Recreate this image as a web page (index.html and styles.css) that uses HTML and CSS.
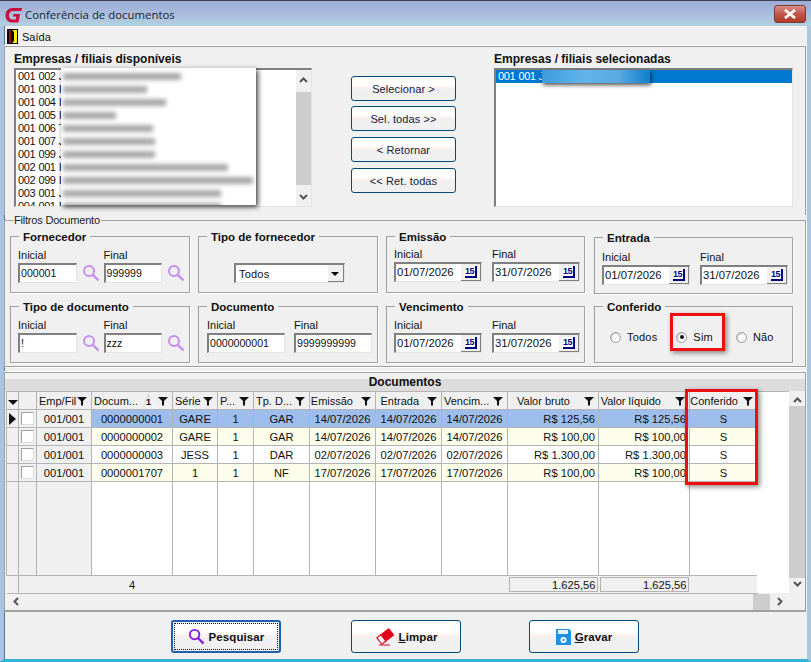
FILE: index.html
```html
<!DOCTYPE html>
<html lang="pt-BR">
  <head>
    <meta charset="UTF-8" />
    <title>Conferência de documentos</title>
    <link rel="stylesheet" href="styles.css">
  </head>
  <body>
    <svg class="icon-defs" width="0" height="0">
      <symbol id="lupa" viewBox="0 0 18 18">
        <circle cx="7" cy="7" r="5" fill="none" stroke="currentColor" stroke-width="2"/>
        <path d="M10.8 10.8 L16.5 16.5" stroke="currentColor" stroke-width="2.4" fill="none"/>
      </symbol>
      <symbol id="funil" viewBox="0 0 10 10">
        <path d="M0 1 H10 L6 5 V9.5 H4 V5 Z" fill="#111"/>
      </symbol>
    </svg>

    <div class="window">
      <div class="titlebar">
        <svg class="logo" width="18" height="18" viewBox="0 0 18 18">
          <path d="M17 2 H8 C3 2 0.5 5.5 0.5 9.5 C0.5 14 3.5 16.5 7.5 16.5 H13.5 L15 8 H8.5 L8 10.5 H11.3 L10.8 13.5 H7.5 C5.5 13.5 4 12 4 9.5 C4 7 5.5 5 8 5 H16.5 Z" fill="#c4123c"/>
        </svg>
        <span class="title">Conferência de documentos</span>
        <div class="close-btn">
          <svg width="16" height="10" viewBox="0 0 16 10"><path d="M3 1 L13 9 M13 1 L3 9" stroke="#fff" stroke-width="2.8"/></svg>
        </div>
      </div>

      <div class="menubar">
        <svg width="12" height="16" viewBox="0 0 12 16">
          <rect width="11" height="15" fill="#000"/>
          <path d="M5 1 H10 V14 H5 L7 12 V3 Z" fill="#ffee00"/>
          <path d="M2 1 H4 V14 H2 Z" fill="#a01010"/>
        </svg>
        <span>Saída</span>
      </div>

      <div class="top-group">
        <div class="list-col">
          <div class="bold-label">Empresas / filiais disponíveis</div>
          <div class="listbox">
            <div class="list-rows">
              <div class="list-row">001 002 J</div>
              <div class="list-row">001 003 I</div>
              <div class="list-row">001 004 I</div>
              <div class="list-row">001 005 I</div>
              <div class="list-row">001 006 T</div>
              <div class="list-row">001 007 J</div>
              <div class="list-row">001 099 J</div>
              <div class="list-row">002 001 I</div>
              <div class="list-row">002 099 I</div>
              <div class="list-row">003 001 J</div>
              <div class="list-row">004 001 I</div>
            </div>
            <div class="list-scroll">
              <svg class="chev" width="9" height="6" viewBox="0 0 9 6"><path d="M1 5 L4.5 1.5 L8 5" fill="none" stroke="#555" stroke-width="2"/></svg>
              <div class="list-thumb"></div>
              <svg class="chev" width="9" height="6" viewBox="0 0 9 6"><path d="M1 1 L4.5 4.5 L8 1" fill="none" stroke="#555" stroke-width="2"/></svg>
            </div>
            <div class="censor">
              <div class="smear" style="width: 118px"></div>
              <div class="smear" style="width: 84px"></div>
              <div class="smear" style="width: 103px"></div>
              <div class="smear" style="width: 53px"></div>
              <div class="smear" style="width: 90px"></div>
              <div class="smear" style="width: 92px"></div>
              <div class="smear" style="width: 92px"></div>
              <div class="smear" style="width: 165px"></div>
              <div class="smear" style="width: 190px"></div>
              <div class="smear" style="width: 158px"></div>
              <div class="smear" style="width: 158px"></div>
            </div>
          </div>
        </div>

        <div class="move-buttons">
          <div class="btn">Selecionar &gt;</div>
          <div class="btn">Sel. todas &gt;&gt;</div>
          <div class="btn">&lt; Retornar</div>
          <div class="btn">&lt;&lt; Ret. todas</div>
        </div>

        <div class="list-col list-col-right">
          <div class="bold-label">Empresas / filiais selecionadas</div>
          <div class="listbox">
            <div class="list-rows">
              <div class="list-row selected">001 001 J</div>
            </div>
            <div class="censor-sel"></div>
          </div>
        </div>
      </div>

      <fieldset class="filters">
        <legend>Filtros Documento</legend>
        <div class="filter-grid">
          <fieldset class="box">
            <legend>Fornecedor</legend>
            <div class="box-row">
              <div class="field w59"><label>Inicial</label><div class="input">000001</div></div>
              <svg class="lupa"><use href="#lupa"/></svg>
              <div class="field w59"><label>Final</label><div class="input">999999</div></div>
              <svg class="lupa"><use href="#lupa"/></svg>
            </div>
          </fieldset>

          <fieldset class="box">
            <legend>Tipo de fornecedor</legend>
            <div class="box-row select-row">
              <div class="select">
                <span>Todos</span>
                <div class="select-arrow"></div>
              </div>
            </div>
          </fieldset>

          <fieldset class="box box-emissao">
            <legend>Emissão</legend>
            <div class="box-row date-row">
              <div class="field w88"><label>Inicial</label><div class="input date">01/07/2026<div class="date-btn"><span class="cal">15</span></div></div></div>
              <div class="field w88"><label>Final</label><div class="input date">31/07/2026<div class="date-btn"><span class="cal">15</span></div></div></div>
            </div>
          </fieldset>

          <fieldset class="box box-last box-entrada">
            <legend>Entrada</legend>
            <div class="box-row date-row">
              <div class="field w88"><label>Inicial</label><div class="input date">01/07/2026<div class="date-btn"><span class="cal">15</span></div></div></div>
              <div class="field w88"><label>Final</label><div class="input date">31/07/2026<div class="date-btn"><span class="cal">15</span></div></div></div>
            </div>
          </fieldset>

          <fieldset class="box">
            <legend>Tipo de documento</legend>
            <div class="box-row">
              <div class="field w59"><label>Inicial</label><div class="input">!</div></div>
              <svg class="lupa"><use href="#lupa"/></svg>
              <div class="field w59"><label>Final</label><div class="input">zzz</div></div>
              <svg class="lupa"><use href="#lupa"/></svg>
            </div>
          </fieldset>

          <fieldset class="box">
            <legend>Documento</legend>
            <div class="box-row doc-row">
              <div class="field w78"><label>Inicial</label><div class="input">0000000001</div></div>
              <div class="field w78"><label>Final</label><div class="input">9999999999</div></div>
            </div>
          </fieldset>

          <fieldset class="box">
            <legend>Vencimento</legend>
            <div class="box-row date-row">
              <div class="field w88"><label>Inicial</label><div class="input date">01/07/2026<div class="date-btn"><span class="cal">15</span></div></div></div>
              <div class="field w88"><label>Final</label><div class="input date">31/07/2026<div class="date-btn"><span class="cal">15</span></div></div></div>
            </div>
          </fieldset>

          <fieldset class="box box-last">
            <legend>Conferido</legend>
            <div class="radio-row">
              <div class="radio-item r-todos"><span class="radio"></span>Todos</div>
              <div class="radio-item r-sim"><span class="radio checked"></span>Sim</div>
              <div class="radio-item"><span class="radio"></span>Não</div>
            </div>
          </fieldset>
        </div>
      </fieldset>

      <div class="docs">
        <div class="docs-title">Documentos</div>
        <div class="docs-body">
          <div class="grid-wrap">
            <table class="grid">
              <colgroup>
                <col class="c-ind"><col class="c-chk"><col class="c-emp"><col class="c-doc"><col class="c-ser"><col class="c-p"><col class="c-tp"><col class="c-dt"><col class="c-dt"><col class="c-dt"><col class="c-val"><col class="c-val"><col class="c-conf">
              </colgroup>
              <thead>
                <tr>
                  <th><span class="tri-down"></span></th>
                  <th></th>
                  <th><div class="th-in"><span>Emp/Fil</span><svg class="funil"><use href="#funil"/></svg></div></th>
                  <th><div class="th-in"><span>Docum...</span><span class="sort-badge">1</span><svg class="funil"><use href="#funil"/></svg></div></th>
                  <th><div class="th-in"><span>Série</span><svg class="funil"><use href="#funil"/></svg></div></th>
                  <th><div class="th-in"><span>P...</span><svg class="funil"><use href="#funil"/></svg></div></th>
                  <th><div class="th-in"><span>Tp. D...</span><svg class="funil"><use href="#funil"/></svg></div></th>
                  <th><div class="th-in th-mid"><span>Emissão</span><svg class="funil"><use href="#funil"/></svg></div></th>
                  <th><div class="th-in th-mid"><span>Entrada</span><svg class="funil"><use href="#funil"/></svg></div></th>
                  <th><div class="th-in"><span>Vencim...</span><svg class="funil"><use href="#funil"/></svg></div></th>
                  <th><div class="th-in th-val"><span>Valor bruto</span><svg class="funil"><use href="#funil"/></svg></div></th>
                  <th><div class="th-in th-val"><span>Valor líquido</span><svg class="funil"><use href="#funil"/></svg></div></th>
                  <th><div class="th-in th-mid th-conf"><span>Conferido</span><svg class="funil"><use href="#funil"/></svg></div></th>
                </tr>
              </thead>
              <tbody>
                <tr class="row-sel">
                  <td class="fixed"><span class="tri-right"></span></td>
                  <td class="fixed"><span class="chk"></span></td>
                  <td class="fixed">001/001</td>
                  <td>0000000001</td><td>GARE</td><td>1</td><td>GAR</td>
                  <td>14/07/2026</td><td>14/07/2026</td><td>14/07/2026</td>
                  <td class="val">R$ 125,56</td><td class="val">R$ 125,56</td><td>S</td>
                </tr>
                <tr class="row-alt">
                  <td class="fixed"></td>
                  <td class="fixed"><span class="chk"></span></td>
                  <td class="fixed">001/001</td>
                  <td>0000000002</td><td>GARE</td><td>1</td><td>GAR</td>
                  <td>14/07/2026</td><td>14/07/2026</td><td>14/07/2026</td>
                  <td class="val">R$ 100,00</td><td class="val">R$ 100,00</td><td>S</td>
                </tr>
                <tr>
                  <td class="fixed"></td>
                  <td class="fixed"><span class="chk"></span></td>
                  <td class="fixed">001/001</td>
                  <td>0000000003</td><td>JESS</td><td>1</td><td>DAR</td>
                  <td>02/07/2026</td><td>02/07/2026</td><td>02/07/2026</td>
                  <td class="val">R$ 1.300,00</td><td class="val">R$ 1.300,00</td><td>S</td>
                </tr>
                <tr class="row-alt">
                  <td class="fixed"></td>
                  <td class="fixed"><span class="chk"></span></td>
                  <td class="fixed">001/001</td>
                  <td>0000001707</td><td>1</td><td>1</td><td>NF</td>
                  <td>17/07/2026</td><td>17/07/2026</td><td>17/07/2026</td>
                  <td class="val">R$ 100,00</td><td class="val">R$ 100,00</td><td>S</td>
                </tr>
                <tr class="row-empty">
                  <td class="fixed"></td><td class="fixed"></td><td class="fixed"></td>
                  <td></td><td></td><td></td><td></td><td></td><td></td><td></td><td></td><td></td><td></td>
                </tr>
              </tbody>
              <tfoot>
                <tr>
                  <td></td>
                  <td colspan="2"></td>
                  <td class="count">4</td>
                  <td colspan="6"></td>
                  <td class="sum-cell"><div class="sum">1.625,56</div></td>
                  <td class="sum-cell"><div class="sum">1.625,56</div></td>
                  <td></td>
                </tr>
              </tfoot>
            </table>
          </div>
          <div class="grid-fill"></div>
          <div class="vscroll">
            <svg width="9" height="6" viewBox="0 0 9 6"><path d="M1 5 L4.5 1.5 L8 5" fill="none" stroke="#555" stroke-width="2"/></svg>
            <div class="vthumb"></div>
            <svg width="9" height="6" viewBox="0 0 9 6"><path d="M1 1 L4.5 4.5 L8 1" fill="none" stroke="#555" stroke-width="2"/></svg>
          </div>
        </div>
        <div class="hscroll">
          <svg width="6" height="9" viewBox="0 0 6 9"><path d="M5 1 L1.5 4.5 L5 8" fill="none" stroke="#555" stroke-width="2"/></svg>
          <div class="hthumb"></div>
          <svg width="6" height="9" viewBox="0 0 6 9"><path d="M1 1 L4.5 4.5 L1 8" fill="none" stroke="#555" stroke-width="2"/></svg>
        </div>
      </div>

      <div class="actions">
        <div class="btn btn-big btn-focus">
          <svg class="big-icon" width="17" height="17"><use href="#lupa"/></svg>
          <span>Pesquisar</span>
        </div>
        <div class="btn btn-big">
          <svg width="20" height="18" viewBox="0 0 20 18">
            <g transform="rotate(-38 10 8)">
              <rect x="2" y="4" width="16" height="9" rx="1" fill="#e4001b"/>
              <rect x="2.5" y="4.5" width="5" height="8" fill="#fff" stroke="#e4001b"/>
            </g>
            <path d="M4 17 H15" stroke="#e4001b"/>
          </svg>
          <span><u>L</u>impar</span>
        </div>
        <div class="btn btn-big">
          <svg width="15" height="16" viewBox="0 0 15 16">
            <path d="M0 0 H13 L15 2 V16 H0 Z" fill="#1e90e6"/>
            <rect x="2" y="1" width="10" height="4" fill="#eaf4ff"/>
            <circle cx="7.5" cy="11" r="3" fill="#fff"/>
            <circle cx="7.5" cy="11" r="1.2" fill="#1e90e6"/>
          </svg>
          <span><u>G</u>ravar</span>
        </div>
      </div>

      <div class="mark mark-sim"></div>
      <div class="mark mark-conf"></div>
    </div>
  </body>
</html>
```

FILE: styles.css
```css
* {
  margin: 0;
  padding: 0;
  box-sizing: border-box;
}

html,
body {
  height: 100%;
  overflow: hidden;
}

body {
  font-family: "Liberation Sans", Arial, sans-serif;
  font-size: 11px;
  color: #111;
  background-color: #f0f0f0;
}

.icon-defs {
  position: absolute;
}

.window {
  position: relative;
  width: 811px;
  height: 662px;
  display: flex;
  flex-direction: column;
  background-color: #f0f0f0;
  border-left: 4px solid #a9c3e3;
  border-right: 4px solid #a9c8e0;
  border-bottom: 3px solid #35b4d8;
  box-shadow: inset 1px 0 0 #5a6f9a;
}

/* title bar */
.titlebar {
  margin-left: -4px;
  margin-right: -4px;
  height: 26px;
  display: flex;
  align-items: center;
  padding: 2px 5px 0 5px;
  border-top: 1px solid #39444f;
  background: linear-gradient(to bottom, #9cabd4, #a9bcdc 50%, #b3d2e2);
}

.title {
  font-family: "Open Sans", "Liberation Sans", sans-serif;
  font-size: 11.4px;
  margin-left: 2px;
  color: #1c2430;
}

.close-btn {
  margin-left: auto;
  width: 32px;
  height: 18px;
  margin-top: -1px;
  display: flex;
  align-items: center;
  justify-content: center;
  border: 1px solid #7d3a34;
  border-radius: 3px;
  background: linear-gradient(to bottom, #d98f85, #c2564a 50%, #b23a2c);
}

.menubar {
  height: 20px;
  display: flex;
  align-items: center;
  gap: 3px;
  padding: 1px 0 0 3px;
}

/* company lists */
.top-group {
  height: 169px;
  display: flex;
  border-top: 1px solid #a0a0a0;
  border-left: 1px solid #a0a0a0;
  border-right: 1px solid #a0a0a0;
  margin-right: 1px;
  box-shadow: 0 -1px 0 #fff;
  padding: 6px 0 0 9px;
}

.list-col {
  width: 298px;
  display: flex;
  flex-direction: column;
}

.list-col-right {
  width: 299px;
  margin-left: 38px;
}

.bold-label {
  font-weight: 700;
  font-size: 12px;
  height: 15px;
  line-height: 13px;
}

.listbox {
  position: relative;
  height: 139px;
  display: flex;
  background-color: #fff;
  border-top: 2px solid #808080;
  border-left: 2px solid #808080;
  border-right: 1px solid #e4e4e4;
  border-bottom: 1px solid #e4e4e4;
}

.list-rows {
  flex: 1;
  overflow: hidden;
}

.list-row {
  height: 13px;
  line-height: 13px;
  padding-left: 2px;
  letter-spacing: -0.4px;
  word-spacing: 0.6px;
  white-space: nowrap;
}

.list-row.selected {
  background-color: #0078cf;
  color: #fff;
}

.list-scroll {
  width: 15px;
  display: flex;
  flex-direction: column;
  align-items: center;
  justify-content: space-between;
  padding: 7px 0 6px;
  background-color: #f0f0f0;
}

.list-thumb {
  width: 15px;
  height: 93px;
  background-color: #cdcdcd;
}

.censor {
  position: absolute;
  left: 45px;
  top: -2px;
  width: 195px;
  height: 137px;
  background-color: #fff;
  box-shadow: 2px 2px 5px rgba(0, 0, 0, 0.75);
  overflow: hidden;
  padding: 5px 0 0 2px;
}

.smear {
  height: 7px;
  margin-bottom: 6px;
  background-color: #a8a8a8;
  filter: blur(2px);
}

.censor-sel {
  position: absolute;
  left: 46px;
  top: 0;
  width: 108px;
  height: 13px;
  background: linear-gradient(to right, #3d9bdd, #62b4ea 40%, #5ba9e2 70%, #0f7fce);
  box-shadow: 1px 2px 4px rgba(0, 0, 0, 0.7);
}

.move-buttons {
  width: 105px;
  margin-left: 39px;
  padding-top: 22px;
  display: flex;
  flex-direction: column;
  gap: 6px;
}

.move-buttons .btn:first-child {
  margin: 1px 0 -1px;
}

.btn {
  height: 25px;
  flex-shrink: 0;
  display: flex;
  align-items: center;
  justify-content: center;
  border: 1px solid #004a7c;
  border-radius: 3px;
  font-size: 11px;
  letter-spacing: 0.1px;
  color: #16233a;
  background: linear-gradient(to bottom, #fff 0, #fff 35%, #fdf2ef 45%, #f0f0f0 55%, #f0f0f0 100%);
}

/* filters */
.filters {
  height: 153px;
  margin-top: -1px;
  margin-right: 1px;
  border: 1px solid #a0a0a0;
  box-shadow: 1px 1px 0 #fff;
  padding: 0 0 0 5px;
}

.filters > legend {
  margin-left: 4px;
  font-size: 11px;
  letter-spacing: -0.2px;
  line-height: 13px;
  padding-right: 1px;
  color: #222;
}

.filter-grid {
  display: grid;
  grid-template-columns: 180px 180px 199px 200px;
  grid-template-rows: 64px 64px;
  row-gap: 6px;
  column-gap: 8px;
  margin-top: 2px;
}

.box {
  border: 1px solid #a0a0a0;
  box-shadow: 1px 1px 0 #fff;
  min-width: 0;
  height: 64px;
}

.box-last {
  margin-left: 1px;
}

.box-entrada {
  margin-top: 1px;
}

.box > legend {
  margin-left: 8px;
  padding: 2px 4px 0;
  font-weight: 700;
  font-size: 11.5px;
  line-height: 13px;
}

.box-row {
  display: flex;
  align-items: flex-end;
  padding: 0 0 0 7px;
  margin-top: 5px;
}

.field {
  display: flex;
  flex-direction: column;
}

.field label {
  line-height: 13px;
  height: 14px;
}

.w59 {
  width: 59px;
}

.w78 {
  width: 78px;
}

.w88 {
  width: 88px;
}

.input {
  height: 20px;
  line-height: 17px;
  padding-left: 1px;
  font-size: 10.6px;
  white-space: nowrap;
  background-color: #fff;
  border-top: 2px solid #808080;
  border-left: 2px solid #808080;
  border-right: 1px solid #e4e4e4;
  border-bottom: 1px solid #e4e4e4;
}

.lupa {
  width: 18px;
  height: 18px;
  color: #c78df0;
  margin: 0 4px 1px 5px;
  flex-shrink: 0;
}

.select-row {
  padding-left: 35px;
  margin-top: 19px;
}

.select {
  width: 111px;
  height: 20px;
  display: flex;
  align-items: center;
  justify-content: space-between;
  padding-left: 3px;
  letter-spacing: 0.2px;
  background-color: #fff;
  border-top: 2px solid #808080;
  border-left: 2px solid #808080;
  border-right: 1px solid #e4e4e4;
  border-bottom: 1px solid #e4e4e4;
}

.select-arrow {
  position: relative;
  width: 16px;
  height: 17px;
  background-color: #f0f0f0;
  border-right: 1px solid #808080;
  border-bottom: 1px solid #808080;
}

.select-arrow::after {
  content: "";
  position: absolute;
  left: 3px;
  top: 7px;
  border-left: 4px solid transparent;
  border-right: 4px solid transparent;
  border-top: 4px solid #000;
}

.date-row {
  gap: 10px;
}

.box-emissao .date-row {
  margin-top: 4px;
}

.box-entrada .date-row {
  margin-top: 6px;
}

.doc-row {
  gap: 9px;
  padding-left: 8px;
}

.input.date {
  position: relative;
  font-size: 11.3px;
}

.date-btn {
  position: absolute;
  right: 0;
  top: 0;
  width: 20px;
  height: 17px;
  display: flex;
  align-items: center;
  justify-content: center;
  background-color: #f0f0f0;
  border-right: 1px solid #808080;
  border-bottom: 1px solid #808080;
}

.cal {
  width: 12px;
  height: 12px;
  font-size: 9px;
  font-weight: 700;
  line-height: 10px;
  letter-spacing: -0.5px;
  text-align: center;
  color: #000080;
  background-color: #fff;
  border-right: 2px solid #000080;
  border-bottom: 2px solid #000080;
}

.radio-row {
  display: flex;
  align-items: center;
  height: 40px;
  padding-left: 15px;
  margin-top: 3px;
  letter-spacing: 0.2px;
}

.radio-item {
  display: flex;
  align-items: center;
  gap: 6px;
}

.r-todos {
  margin-right: 19px;
}

.r-sim {
  margin-right: 23px;
}

.radio {
  position: relative;
  width: 11px;
  height: 11px;
  border-radius: 50%;
  background-color: #fff;
  border: 1px solid #9a9a9a;
  box-shadow: inset 1px 1px 1px #ccc;
}

.radio.checked::after {
  content: "";
  position: absolute;
  left: 2.5px;
  top: 2.5px;
  width: 4px;
  height: 4px;
  border-radius: 50%;
  background-color: #111;
}

/* documents grid */
.docs {
  margin-top: 5px;
  margin-right: 1px;
  height: 240px;
  display: flex;
  flex-direction: column;
  border: 1px solid #a0a0a0;
  border-bottom-width: 2px;
  box-shadow: 0 -1px 0 #fff;
}

.docs-title {
  height: 18px;
  padding-top: 2px;
  text-align: center;
  font-weight: 700;
  font-size: 12px;
  line-height: 14px;
  background: linear-gradient(to bottom, #f0f0f0 0, #f0f0f0 36%, #dcdcdc 36%, #dcdcdc 100%);
}

.docs-body {
  display: flex;
  height: 202px;
  padding-left: 1px;
}

.grid-wrap {
  width: 751px;
  height: 202px;
}

.grid {
  width: 751px;
  height: 202px;
  table-layout: fixed;
  border-collapse: collapse;
  font-size: 11.2px;
}

.c-ind {
  width: 12px;
}

.c-chk {
  width: 18px;
}

.c-emp {
  width: 55px;
}

.c-doc {
  width: 81px;
}

.c-ser {
  width: 45px;
}

.c-p {
  width: 36px;
}

.c-tp {
  width: 56px;
}

.c-dt {
  width: 66px;
}

.c-val {
  width: 91px;
}

.c-conf {
  width: 68px;
}

.grid th {
  height: 18px;
  font-weight: 400;
  font-size: 11px;
  background-color: #f0f0f0;
  border: 1px solid #b4b4b4;
  padding: 0;
  overflow: hidden;
}

.th-in {
  display: flex;
  align-items: center;
  justify-content: space-between;
  padding: 0 4px 0 2px;
  white-space: nowrap;
}

.th-mid {
  justify-content: flex-end;
  gap: 8px;
}

.th-conf {
  gap: 5px;
}

.th-val {
  justify-content: flex-end;
  gap: 14px;
}

.funil {
  width: 10px;
  height: 10px;
  flex-shrink: 0;
}

.sort-badge {
  font-size: 9px;
  font-weight: 700;
  width: 15px;
  height: 14px;
  line-height: 17px;
  text-align: center;
  background: linear-gradient(to bottom right, #bbb, #f4f4f4 60%);
  clip-path: polygon(50% 0, 100% 100%, 0 100%);
  margin-left: 1px;
}

.grid td {
  height: 18px;
  padding: 0 2px;
  text-align: center;
  white-space: nowrap;
  overflow: hidden;
  background-color: #fff;
  border: 1px solid #b4b4b4;
}

.grid td.fixed {
  background-color: #f0f0f0;
  padding: 0;
}

.grid .row-sel td:not(.fixed) {
  background-color: #9dbdec;
}

.grid .row-alt td:not(.fixed) {
  background-color: #fdfdeb;
}

.grid td.val {
  text-align: right;
  padding: 0 3px 0 0;
}

.grid .row-empty td {
  height: 94px;
}

.grid tfoot td {
  height: 18px;
  background-color: #f0f0f0;
  border-left: 0;
  border-right: 0;
}

.grid tfoot td:first-child {
  border-right: 1px solid #b4b4b4;
}

.grid tfoot .sum-cell {
  padding: 0 1px;
}

.sum {
  height: 15px;
  line-height: 14px;
  text-align: right;
  padding-right: 1px;
  border: 1px solid #b4b4b4;
}

.chk {
  display: inline-block;
  vertical-align: middle;
  width: 13px;
  height: 13px;
  background-color: #fff;
  border: 1px solid #a0a0a0;
  border-right-color: #ddd;
  border-bottom-color: #ddd;
}

.tri-down {
  display: inline-block;
  border-left: 5px solid transparent;
  border-right: 5px solid transparent;
  border-top: 5px solid #111;
}

.tri-right {
  display: inline-block;
  vertical-align: middle;
  border-top: 6px solid transparent;
  border-bottom: 6px solid transparent;
  border-left: 7px solid #111;
}

.grid-fill {
  width: 32px;
  height: 202px;
  background-color: #fff;
  border-top: 1px solid #b4b4b4;
}

.vscroll {
  width: 16px;
  display: flex;
  flex-direction: column;
  align-items: center;
  justify-content: space-between;
  padding: 6px 0 6px;
  background-color: #f0f0f0;
}

.vthumb {
  width: 16px;
  height: 172px;
  background-color: #cdcdcd;
}

.hscroll {
  flex: 1;
  display: flex;
  align-items: center;
  padding: 0 22px 0 8px;
}

.hthumb {
  width: 17px;
  height: 16px;
  margin-left: auto;
  margin-right: 7px;
  background-color: #cdcdcd;
}

/* bottom buttons */
.actions {
  flex: 1;
  display: flex;
  padding: 8px 0 0 167px;
}

.btn-big {
  width: 110px;
  height: 33px;
  gap: 4px;
  margin-right: 70px;
  font-weight: 700;
  font-size: 11.5px;
  color: #111;
}

.btn-big:nth-child(2) {
  margin-right: 68px;
}

.btn-focus {
  border: 2px solid #1d5fb0;
  outline: 1px dotted #111;
  outline-offset: -4px;
}

.big-icon {
  color: #8a18e6;
}

/* red highlights */
.mark {
  position: absolute;
  border: 3px solid #ef0d0d;
  box-shadow: 2px 2px 5px rgba(0, 0, 0, 0.45);
}

.mark-sim {
  left: 666px;
  top: 313px;
  width: 55px;
  height: 38px;
}

.mark-conf {
  left: 681px;
  top: 389px;
  width: 73px;
  height: 96px;
}
```
